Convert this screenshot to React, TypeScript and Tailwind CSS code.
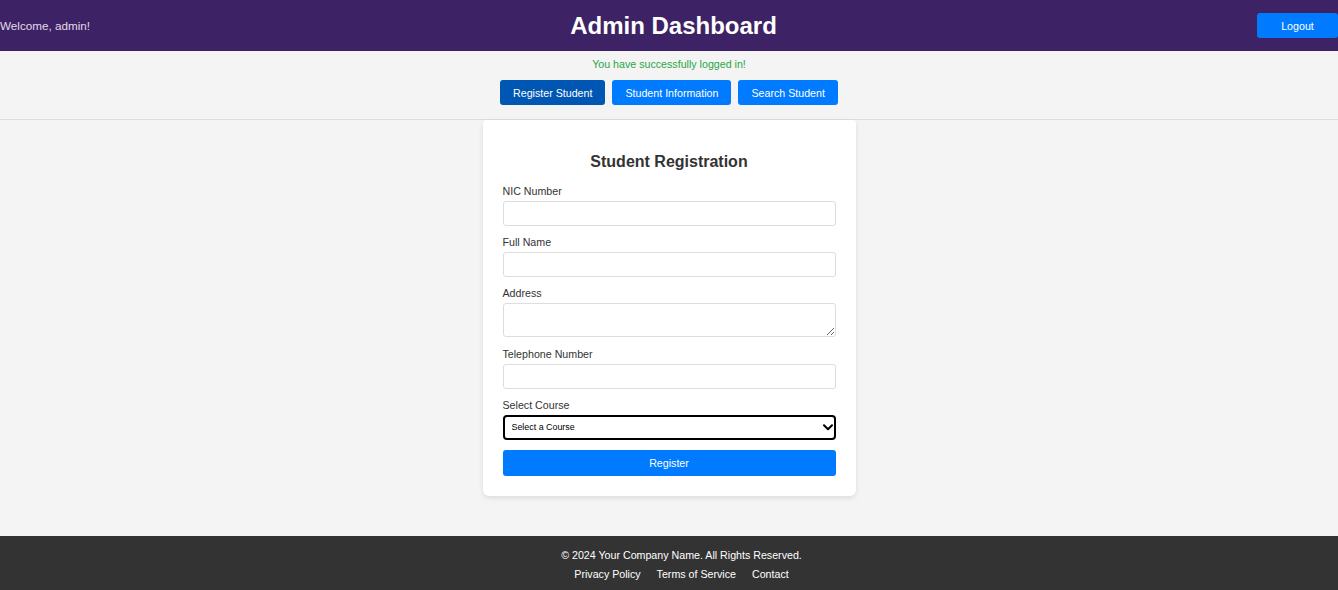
import React, { useState } from 'react';

const font = { fontFamily: '"Liberation Sans", Arial, sans-serif' };

function Field({ label, children }: { label: string; children: React.ReactNode }) {
  return (
    <div>
      <label className="block text-[10.67px] leading-[12px] mb-[4px] text-[#333]">{label}</label>
      {children}
    </div>
  );
}

export default function App() {
  const [course, setCourse] = useState('');

  return (
    <div className="min-h-screen flex flex-col bg-[#f4f4f4]" style={font}>
      <header className="h-[51px] bg-[#3d2265] flex items-center justify-between">
        <span className="text-[11.7px] text-[#e2dcea]">Welcome, admin!</span>
        <h1 className="text-[24px] font-bold text-white leading-none">Admin Dashboard</h1>
        <button className="h-[25px] w-[81px] bg-[#007bff] text-white text-[10.67px] rounded-[3px]">
          Logout
        </button>
      </header>

      <nav className="pt-[7px] pb-[14px] border-b border-[#dddddd] flex flex-col items-center">
        <p className="text-[10.67px] leading-[12px] text-[#28a745] mb-[10px]">
          You have successfully logged in!
        </p>
        <div className="flex gap-[7px]">
          <button className="h-[25px] px-[13px] bg-[#0056b3] text-white text-[10.67px] rounded-[3px]">
            Register Student
          </button>
          <button className="h-[25px] px-[13px] bg-[#007bff] text-white text-[10.67px] rounded-[3px]">
            Student Information
          </button>
          <button className="h-[25px] px-[13px] bg-[#007bff] text-white text-[10.67px] rounded-[3px]">
            Search Student
          </button>
        </div>
      </nav>

      <main className="flex-1 flex justify-center">
        <div className="w-[373px] h-fit bg-white rounded-b-[6px] rounded-t-[4px] shadow-[0_2px_5px_rgba(0,0,0,0.1)] px-[20px] pt-[33px] pb-[20px]">
          <h2 className="text-[16px] leading-[18px] font-bold text-[#333] text-center mb-[13.5px]">
            Student Registration
          </h2>

          <Field label="NIC Number">
            <input className="block w-full h-[25px] border border-[#dddddd] rounded-[3px] mb-[10px] outline-none" />
          </Field>
          <Field label="Full Name">
            <input className="block w-full h-[25px] border border-[#dddddd] rounded-[3px] mb-[10px] outline-none" />
          </Field>
          <Field label="Address">
            <textarea className="block w-full h-[34px] border border-[#dddddd] rounded-[3px] mb-[11px] outline-none" />
          </Field>
          <Field label="Telephone Number">
            <input className="block w-full h-[25px] border border-[#dddddd] rounded-[3px] mb-[10px] outline-none" />
          </Field>
          <Field label="Select Course">
            <div className="relative mb-[10px]">
              <select
                value={course}
                onChange={(e) => setCourse(e.target.value)}
                className="block w-full h-[25.5px] appearance-none border-2 border-black rounded-[4px] pl-[7px] text-[8.9px] text-black bg-white outline-none"
              >
                <option value="">Select a Course</option>
                <option value="se">Software Engineering</option>
                <option value="cs">Computer Science</option>
              </select>
              <svg
                className="absolute right-[3px] top-[9px] pointer-events-none"
                width="10"
                height="7"
                viewBox="0 0 10 7"
                fill="none"
              >
                <polyline points="1,1.2 5,5.2 9,1.2" stroke="black" strokeWidth="2" strokeLinecap="round" strokeLinejoin="round" />
              </svg>
            </div>
          </Field>

          <button className="block w-full h-[26px] bg-[#007bff] text-white text-[10.67px] rounded-[3px]">
            Register
          </button>
        </div>
      </main>

      <footer className="bg-[#333333] text-white text-[10.67px] text-center pt-[13px] pb-[10px] pl-[25px]">
        <p className="leading-[12px]">© 2024 Your Company Name. All Rights Reserved.</p>
        <div className="leading-[12px] mt-[7px] flex justify-center">
          <a className="mx-[8px]" href="#">Privacy Policy</a>
          <a className="mx-[8px]" href="#">Terms of Service</a>
          <a className="mx-[8px]" href="#">Contact</a>
        </div>
      </footer>
    </div>
  );
}
